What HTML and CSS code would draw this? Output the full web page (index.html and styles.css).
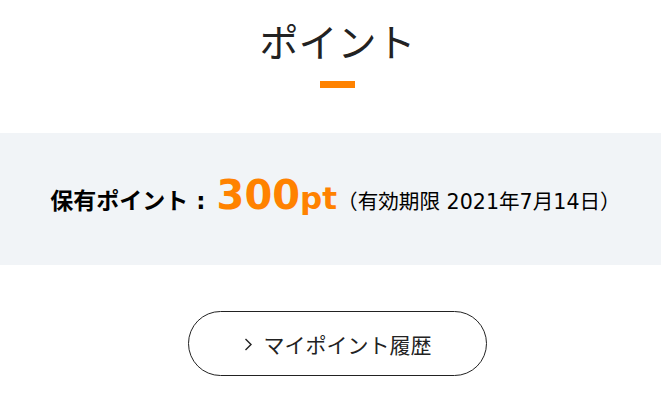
FILE: index.html
```html
<!DOCTYPE html>
<html lang="ja">
<head>
    <meta charset="UTF-8">
    <meta name="viewport" content="width=device-width, initial-scale=1.0">
    <title>ポイント</title>
    <link rel="stylesheet" href="styles.css">
</head>
<body>

    <h1 class="page-title">ポイント</h1>

    <div class="point-box">
        <span class="point-label">保有ポイント :</span>
        <span class="point-value">300<small>pt</small></span>
        <span class="point-limit">（有効期限 2021年7月14日）</span>
    </div>

    <div class="history">
        <a class="history-btn" href="#">
            <svg class="arrow" width="9" height="16" viewBox="0 0 9 16">
                <path d="M1.5 3 L7 8.5 L1.5 14" fill="none" stroke="#222" stroke-width="1.4"/>
            </svg>
            マイポイント履歴
        </a>
    </div>

</body>
</html>
```

FILE: styles.css
```css
body {
    margin: 0;
    font-family: "DejaVu Sans", "Noto Sans CJK JP", sans-serif;
    color: #222;
    background: #fff;
}

.page-title {
    margin: 0;
    padding: 14px 0 0 14px;
    font-family: "Noto Sans CJK JP", sans-serif;
    font-size: 39px;
    font-weight: 400;
    line-height: 52px;
    text-align: center;
}

.page-title::after {
    content: "";
    display: block;
    width: 35px;
    height: 7px;
    margin: 15px auto 0;
    background: #ff8200;
}

.point-box {
    margin-top: 45px;
    height: 132px;
    box-sizing: border-box;
    padding: 42px 0 0 10px;
    background: #f1f4f7;
    display: flex;
    justify-content: center;
    align-items: baseline;
    line-height: 1;
    color: #000;
}

.point-label {
    font-size: 23px;
    font-weight: 700;
    margin-right: 11px;
}

.point-value {
    font-size: 40px;
    font-weight: 700;
    color: #ff8200;
}

.point-value small {
    font-size: 31px;
}

.point-limit {
    font-size: 20.6px;
}

.history {
    display: flex;
    justify-content: center;
    margin-top: 46px;
    padding-left: 14px;
}

.history-btn {
    display: flex;
    align-items: center;
    justify-content: center;
    gap: 11px;
    width: 297px;
    height: 63px;
    border: 1px solid #222;
    border-radius: 33px;
    color: #222;
    text-decoration: none;
    font-family: "Noto Sans CJK JP", sans-serif;
    font-size: 21px;
}
```
